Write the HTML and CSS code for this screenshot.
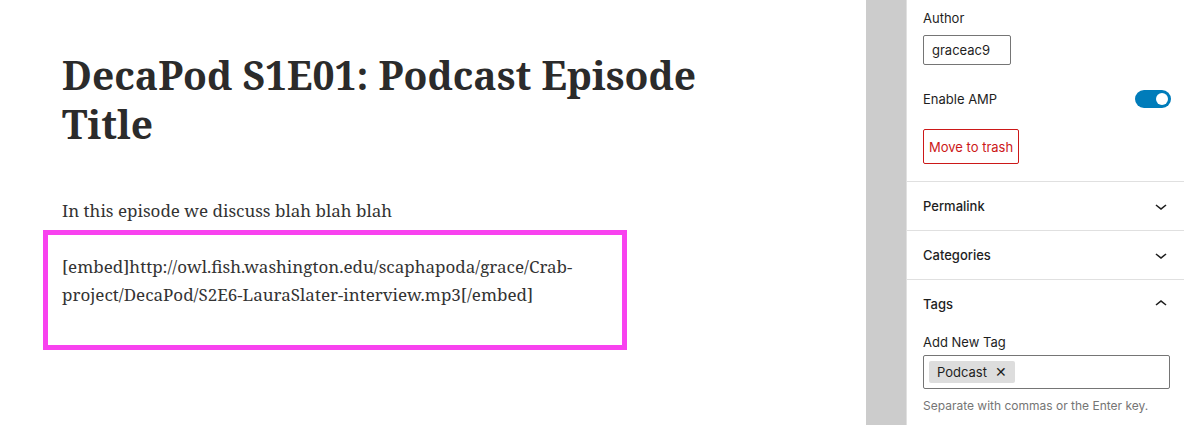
FILE: index.html
```html
<!DOCTYPE html>
<html>
<head>
<meta charset="utf-8">
<link rel="stylesheet" href="styles.css">
</head>
<body>
<div class="app">
  <main class="editor">
    <h1 class="title">DecaPod S1E01: Podcast Episode Title</h1>
    <p class="para">In this episode we discuss blah blah blah</p>
    <div class="embed-box">
      <p class="para embed">[embed]http://owl.fish.washington.edu/scaphapoda/grace/Crab-project/DecaPod/S2E6-LauraSlater-interview.mp3[/embed]</p>
    </div>
  </main>
  <div class="gutter"></div>
  <aside class="sidebar">
    <div class="panel first">
      <div class="label">Author</div>
      <div class="author-input">graceac9</div>
      <div class="toggle-row">
        <span>Enable AMP</span>
        <span class="toggle"><span class="knob"></span></span>
      </div>
      <button class="trash">Move to trash</button>
    </div>
    <div class="panel section">
      <span class="sec-title">Permalink</span>
      <svg class="chev" width="24" height="24" viewBox="0 0 24 24"><path d="M17.5 11.6L12 16l-5.5-4.4.9-1.2L12 14l4.5-3.6 1 1.2z"/></svg>
    </div>
    <div class="panel section">
      <span class="sec-title">Categories</span>
      <svg class="chev" width="24" height="24" viewBox="0 0 24 24"><path d="M17.5 11.6L12 16l-5.5-4.4.9-1.2L12 14l4.5-3.6 1 1.2z"/></svg>
    </div>
    <div class="panel tags">
      <div class="section tags-head">
        <span class="sec-title">Tags</span>
        <svg class="chev" width="24" height="24" viewBox="0 0 24 24"><path d="M6.5 12.4L12 8l5.5 4.4-.9 1.2L12 10l-4.5 3.6-1-1.2z"/></svg>
      </div>
      <div class="label">Add New Tag</div>
      <div class="tag-input">
        <span class="chip">Podcast <span class="x">✕</span></span>
      </div>
      <div class="help">Separate with commas or the Enter key.</div>
    </div>
  </aside>
</div>
</body>
</html>
```

FILE: styles.css
```css
* { box-sizing: border-box; }
html, body { margin: 0; padding: 0; background: #fff; }
body { width: 1184px; height: 425px; overflow: hidden; }
.app { display: flex; height: 425px; }
.editor {
  width: 866px;
  flex: none;
  padding: 50px 0 0 43px;
  font-family: "Noto Serif", "DejaVu Serif", serif;
  color: #2e2e2e;
}
.title {
  margin: 0 0 0 19px;
  font-size: 39px;
  line-height: 49px;
  font-weight: 700;
  width: 680px;
  color: #2b2b2b;
}
.para {
  margin: 0;
  font-size: 17px;
  line-height: 28px;
  color: #333;
}
.editor > .para { margin: 49px 0 0 19px; }
.embed-box {
  margin-top: 5px;
  width: 584px;
  height: 120px;
  border: 5px solid #f842ef;
  padding: 18px 14px;
}
.gutter { width: 40px; flex: none; background: #cccccc; }
.sidebar {
  flex: 1;
  border-left: 1px solid #e0e0e0;
  font-family: Inter, "Liberation Sans", sans-serif;
  font-size: 13px;
  color: #1e1e1e;
}
.panel { padding: 0 16px; border-bottom: 1px solid #e0e0e0; }
.first { padding-top: 10px; padding-bottom: 17px; }
.label { line-height: 16px; }
.author-input {
  margin-top: 9px;
  width: 88px;
  height: 30px;
  border: 1px solid #757575;
  border-radius: 2px;
  padding: 0 8px;
  line-height: 28px;
  color: #1e1e1e;
}
.toggle-row {
  display: flex;
  justify-content: space-between;
  align-items: center;
  margin-top: 25px;
  height: 18px;
}
.toggle {
  width: 36px;
  height: 18px;
  border-radius: 9px;
  background: #007cba;
  position: relative;
  margin-right: -3px;
}
.knob {
  position: absolute;
  right: 3px;
  top: 3px;
  width: 12px;
  height: 12px;
  border-radius: 50%;
  background: #fff;
}
.trash {
  display: block;
  margin-top: 21px;
  height: 35px;
  padding: 0 5px;
  border: 1px solid #cc1818;
  border-radius: 2px;
  background: #fff;
  color: #cc1818;
  font-family: inherit;
  font-size: 13px;
}
.section {
  display: flex;
  justify-content: space-between;
  align-items: center;
  height: 49px;
}
.sec-title { font-weight: 500; }
.chev { fill: #1e1e1e; margin-right: -5px; }
.tags { border-bottom: none; }
.tags-head { height: 48px; padding: 0; }
.tags .label { margin-top: 6px; }
.tag-input {
  margin-top: 5px;
  height: 34px;
  border: 1px solid #757575;
  border-radius: 2px;
  padding: 5px;
  display: flex;
  align-items: center;
  margin-right: -2px;
}
.chip {
  background: #dddddd;
  height: 22px;
  line-height: 22px;
  padding: 0 8px;
  border-radius: 2px;
}
.x { margin-left: 4px; font-size: 14px; }
.help {
  margin-top: 9px;
  font-size: 12px;
  color: #757575;
}
```
